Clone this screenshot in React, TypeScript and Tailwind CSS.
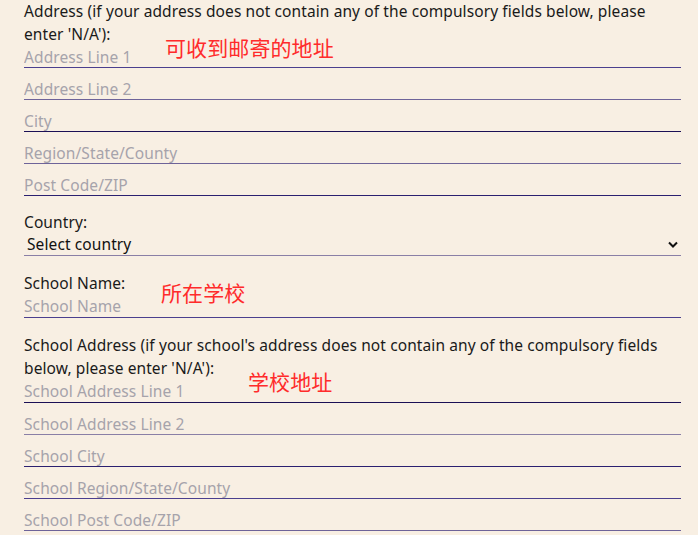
import React from "react";

const font = { fontFamily: '"Noto Sans", "Open Sans", Arial, sans-serif' };

interface FieldProps {
  placeholder: string;
  line: string;
  first?: boolean;
  tall?: boolean;
}

const Field: React.FC<FieldProps> = ({ placeholder, line, first, tall }) => (
  <input
    type="text"
    placeholder={placeholder}
    className={`block w-full ${tall ? "h-[23px]" : "h-[22px]"} bg-transparent outline-none border-b text-[15.5px] leading-[21px] text-[#222] placeholder:text-[#a6a3ab] ${line} ${first ? "" : "mt-[10px]"}`}
  />
);

const Note: React.FC<{ text: string; className: string }> = ({ text, className }) => (
  <span
    className={`absolute text-[21px] leading-none text-[#ff2b2b] ${className}`}
    style={{ fontFamily: '"Noto Sans CJK SC", sans-serif' }}
  >
    {text}
  </span>
);

export default function App() {
  return (
    <div
      className="min-h-screen w-full bg-[#f8efe3] pl-6 pr-[17px] text-[15.5px] leading-[23px] text-[#1a1a1a] tracking-[0.1px]"
      style={font}
    >
      {/* Address */}
      <div className="relative">
        <p className="pr-2">
          Address (if your address does not contain any of the compulsory fields below, please
          enter 'N/A'):
        </p>
        <Field first placeholder="Address Line 1" line="border-[#4b3f8e]" />
        <Field placeholder="Address Line 2" line="border-[#6e6399]" />
        <Field placeholder="City" line="border-[#1b0f55]" />
        <Field placeholder="Region/State/County" line="border-[#6e6399]" />
        <Field placeholder="Post Code/ZIP" line="border-[#2b2070]" />
        <Note text="可收到邮寄的地址" className="left-[141px] top-[37px]" />
      </div>

      {/* Country */}
      <div className="mt-[15px]">
        <p>Country:</p>
        <div className="relative">
          <select className="block w-full h-[22px] appearance-none bg-transparent outline-none border-b border-[#8a7fa6] pl-[3px] text-[15.5px] leading-[21px] text-[#111]">
            <option>Select country</option>
          </select>
          <svg
            className="pointer-events-none absolute right-[3px] top-[7px] w-[10px] h-[7px]"
            viewBox="0 0 10 7"
            fill="none"
            stroke="#111"
            strokeWidth={2}
          >
            <path d="M1 1.5l4 4 4-4" />
          </svg>
        </div>
      </div>

      {/* School name */}
      <div className="relative mt-4">
        <p>School Name:</p>
        <Note text="所在学校" className="left-[137px] top-[10px]" />
        <Field first tall placeholder="School Name" line="border-[#4b3f8e]" />
      </div>

      {/* School address */}
      <div className="relative mt-4">
        <p className="pr-2">
          School Address (if your school's address does not contain any of the compulsory fields
          below, please enter 'N/A'):
        </p>
        <Field first tall placeholder="School Address Line 1" line="border-[#1b0f55]" />
        <Field placeholder="School Address Line 2" line="border-[#8a7fa6]" />
        <Field placeholder="School City" line="border-[#2b2070]" />
        <Field placeholder="School Region/State/County" line="border-[#4b3f8e]" />
        <Field placeholder="School Post Code/ZIP" line="border-[#6e6399]" />
        <Note text="学校地址" className="left-[224px] top-[37px]" />
      </div>
    </div>
  );
}
